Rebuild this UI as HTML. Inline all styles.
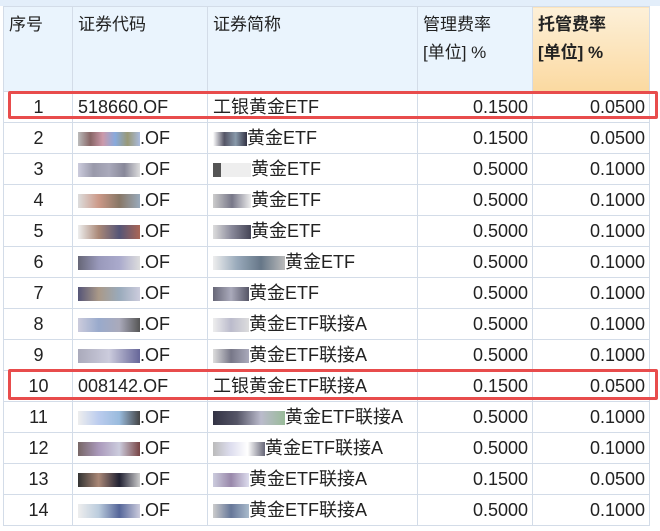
<!DOCTYPE html><html><head><meta charset="utf-8"><style>
body{margin:0;width:660px;height:531px;background:#fff;overflow:hidden;font-family:"Liberation Sans","Noto Sans CJK SC",sans-serif;color:#222;position:relative}
table{position:absolute;left:3px;top:6px;border-collapse:collapse;table-layout:fixed}
td,th{border:1px solid #d3dce8;font-size:18px;padding:0 4px 0 5px;white-space:nowrap;overflow:hidden}
th{height:80px;vertical-align:top;text-align:left;font-weight:normal;background:#eaf4fd;padding-top:4px;line-height:28px;font-size:17px}
th.o{background:linear-gradient(#fdf0d8,#fbd9a0);font-weight:bold}
td{height:30px;line-height:28px;vertical-align:middle}
td.n{text-align:center}td.r{text-align:right}
.b{display:inline-block;height:14px;vertical-align:middle}
.red{position:absolute;border:3px solid #e84c4c;left:8px;width:644px;border-radius:2px}
.top{position:absolute;left:0;top:0;width:660px;height:6px;background:#e3eefa}
</style></head><body><div class="top"></div>
<table>
<colgroup><col style="width:69px"><col style="width:135px"><col style="width:210px"><col style="width:115px"><col style="width:117px"></colgroup>
<tr><th>序号</th><th>证券代码</th><th>证券简称</th><th>管理费率<br>[单位] %</th><th class="o">托管费率<br>[单位] %</th></tr>
<tr><td class="n">1</td><td>518660.OF</td><td>工银黄金ETF</td><td class="r">0.1500</td><td class="r">0.0500</td></tr>
<tr><td class="n">2</td><td><span class="b" style="width:62px;background:linear-gradient(90deg,#bbb,#866,#c9a,#8ad,#997,#abd)"></span>.OF</td><td><span class="b" style="width:34px;background:linear-gradient(90deg,#fff,#556,#89a,#334)"></span>黄金ETF</td><td class="r">0.1500</td><td class="r">0.0500</td></tr>
<tr><td class="n">3</td><td><span class="b" style="width:62px;background:linear-gradient(90deg,#ccd,#99a,#aab,#889,#ddd)"></span>.OF</td><td><span class="b" style="width:8px;background:#555"></span><span class="b" style="width:30px;background:#eee"></span>黄金ETF</td><td class="r">0.5000</td><td class="r">0.1000</td></tr>
<tr><td class="n">4</td><td><span class="b" style="width:62px;background:linear-gradient(90deg,#ddd,#c98,#876,#9ab)"></span>.OF</td><td><span class="b" style="width:38px;background:linear-gradient(90deg,#ccc,#778,#eee)"></span>黄金ETF</td><td class="r">0.5000</td><td class="r">0.1000</td></tr>
<tr><td class="n">5</td><td><span class="b" style="width:62px;background:linear-gradient(90deg,#eee,#a87,#557,#a65)"></span>.OF</td><td><span class="b" style="width:38px;background:linear-gradient(90deg,#ddd,#889,#445)"></span>黄金ETF</td><td class="r">0.5000</td><td class="r">0.1000</td></tr>
<tr><td class="n">6</td><td><span class="b" style="width:62px;background:linear-gradient(90deg,#667,#99b,#aac,#ddd)"></span>.OF</td><td><span class="b" style="width:72px;background:linear-gradient(90deg,#eee,#9ab,#678,#bbb)"></span>黄金ETF</td><td class="r">0.5000</td><td class="r">0.1000</td></tr>
<tr><td class="n">7</td><td><span class="b" style="width:62px;background:linear-gradient(90deg,#557,#a98,#9ab,#ccd)"></span>.OF</td><td><span class="b" style="width:36px;background:linear-gradient(90deg,#667,#aab,#556)"></span>黄金ETF</td><td class="r">0.5000</td><td class="r">0.1000</td></tr>
<tr><td class="n">8</td><td><span class="b" style="width:62px;background:linear-gradient(90deg,#ccd,#9ac,#aab,#555)"></span>.OF</td><td><span class="b" style="width:36px;background:linear-gradient(90deg,#eee,#bbc,#ddd)"></span>黄金ETF联接A</td><td class="r">0.5000</td><td class="r">0.1000</td></tr>
<tr><td class="n">9</td><td><span class="b" style="width:62px;background:linear-gradient(90deg,#aab,#ccd,#669)"></span>.OF</td><td><span class="b" style="width:36px;background:linear-gradient(90deg,#ddd,#778,#aab)"></span>黄金ETF联接A</td><td class="r">0.5000</td><td class="r">0.1000</td></tr>
<tr><td class="n">10</td><td>008142.OF</td><td>工银黄金ETF联接A</td><td class="r">0.1500</td><td class="r">0.0500</td></tr>
<tr><td class="n">11</td><td><span class="b" style="width:62px;background:linear-gradient(90deg,#eee,#bce,#9bd,#444)"></span>.OF</td><td><span class="b" style="width:72px;background:linear-gradient(90deg,#334,#556,#bbc,#9b9)"></span>黄金ETF联接A</td><td class="r">0.5000</td><td class="r">0.1000</td></tr>
<tr><td class="n">12</td><td><span class="b" style="width:62px;background:linear-gradient(90deg,#766,#a9b,#ccd,#744)"></span>.OF</td><td><span class="b" style="width:52px;background:linear-gradient(90deg,#bbb,#dde,#fff,#667)"></span>黄金ETF联接A</td><td class="r">0.5000</td><td class="r">0.1000</td></tr>
<tr><td class="n">13</td><td><span class="b" style="width:62px;background:linear-gradient(90deg,#333,#a87,#223,#ccc)"></span>.OF</td><td><span class="b" style="width:36px;background:linear-gradient(90deg,#ccd,#98a,#dde)"></span>黄金ETF联接A</td><td class="r">0.1500</td><td class="r">0.0500</td></tr>
<tr><td class="n">14</td><td><span class="b" style="width:62px;background:linear-gradient(90deg,#eee,#bcd,#569,#ccd)"></span>.OF</td><td><span class="b" style="width:36px;background:linear-gradient(90deg,#ccc,#679,#abc)"></span>黄金ETF联接A</td><td class="r">0.5000</td><td class="r">0.1000</td></tr>
</table>
<div class="red" style="top:91px;height:22px"></div>
<div class="red" style="top:369px;height:25px"></div>
</body></html>
